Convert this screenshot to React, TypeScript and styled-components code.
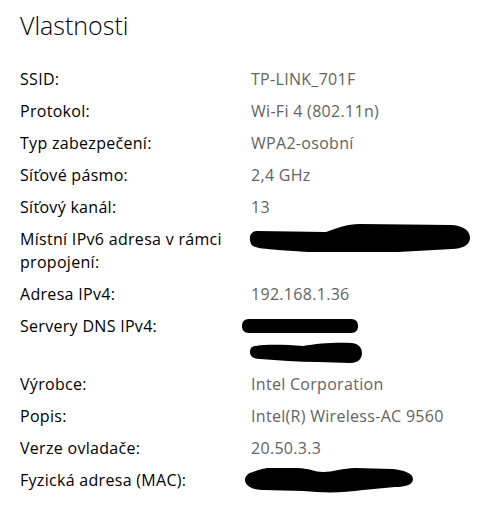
import { Fragment } from 'react';
import styled, { createGlobalStyle } from 'styled-components';

const GlobalStyle = createGlobalStyle`
    html, body {
        margin: 0;
        padding: 0;
        background: #ffffff;
    }
    body {
        font-family: "Open Sans", "Noto Sans", sans-serif;
        color: #000000;
    }
`;

const Page = styled.div`
    width: 490px;
    height: 511px;
    padding: 0 20px;
    box-sizing: border-box;
    overflow: hidden;
`;

const Title = styled.h1`
    margin: 0;
    padding-top: 9px;
    font-size: 25px;
    font-weight: 300;
    line-height: 32px;
`;

const PropGrid = styled.div`
    margin-top: 27px;
    display: grid;
    grid-template-columns: 221px 1fr;
    column-gap: 10px;
    row-gap: 9px;
    font-size: 16px;
    letter-spacing: 0.3px;
    line-height: 23px;
`;

const Label = styled.div`
    color: #000000;
`;

const Value = styled.div`
    color: #636363;
`;

// one line of the value column, the marker scribble hangs over it
const Slot = styled.div`
    height: 23px;
`;

const Scribble = styled.svg<{ $shift: number; $left: number }>`
    display: block;
    margin-top: ${(p) => p.$shift}px;
    margin-left: ${(p) => p.$left}px;
`;

type Blob = { w: number; h: number; shift: number; left: number; d: string };

const ipv6Blob: Blob = {
    w: 224,
    h: 32,
    shift: -5,
    left: -3,
    d: 'M10 8 L78 9 C90 5 98 1 112 1 L204 2 C216 3 222 8 222 15 C222 22 214 26 204 26 L150 29 L60 29 L30 27 C18 26 8 25 5 23 C1 20 1 12 4 10 C6 8 8 8 10 8 Z',
};

const dnsBlobs: Blob[] = [
    {
        w: 120,
        h: 18,
        shift: 2,
        left: -11,
        d: 'M9 2 L111 2 C116 2 118 5 118 9 C118 13 116 16 111 16 L9 16 C4 16 2 13 2 9 C2 5 4 2 9 2 Z',
    },
    {
        w: 116,
        h: 24,
        shift: 1,
        left: -3,
        d: 'M8 5 C20 3 40 4 55 5 C70 2 90 1 104 2 C111 3 114 7 114 12 C114 18 110 22 102 22 L70 21 C50 21 30 19 12 18 C5 18 2 15 2 11 C2 7 4 5 8 5 Z',
    },
];

const macBlob: Blob = {
    w: 172,
    h: 30,
    shift: -3,
    left: -8,
    d: 'M10 6 C15 4 18 3 24 2 L55 2 C65 2 72 6 80 6 C90 6 100 2 112 2 L150 3 C160 4 170 7 170 13 C170 19 162 21 152 21 L120 24 C100 27 80 27 60 25 L20 24 C10 24 2 20 2 14 C2 10 5 7 10 6 Z',
};

type Row = { label: string; value?: string; blobs?: Blob[] };

const rows: Row[] = [
    { label: 'SSID:', value: 'TP-LINK_701F' },
    { label: 'Protokol:', value: 'Wi-Fi 4 (802.11n)' },
    { label: 'Typ zabezpečení:', value: 'WPA2-osobní' },
    { label: 'Síťové pásmo:', value: '2,4 GHz' },
    { label: 'Síťový kanál:', value: '13' },
    { label: 'Místní IPv6 adresa v rámci propojení:', blobs: [ipv6Blob] },
    { label: 'Adresa IPv4:', value: '192.168.1.36' },
    { label: 'Servery DNS IPv4:', blobs: dnsBlobs },
    { label: 'Výrobce:', value: 'Intel Corporation' },
    { label: 'Popis:', value: 'Intel(R) Wireless-AC 9560' },
    { label: 'Verze ovladače:', value: '20.50.3.3' },
    { label: 'Fyzická adresa (MAC):', blobs: [macBlob] },
];

function Redaction({ blob }: { blob: Blob }) {
    return (
        <Slot>
            <Scribble
                $shift={blob.shift}
                $left={blob.left}
                width={blob.w}
                height={blob.h}
                viewBox={`0 0 ${blob.w} ${blob.h}`}
            >
                <path d={blob.d} fill="#000000" />
            </Scribble>
        </Slot>
    );
}

function App() {
    return (
        <Page>
            <GlobalStyle />
            <Title>Vlastnosti</Title>
            <PropGrid>
                {rows.map((row) => (
                    <Fragment key={row.label}>
                        <Label>{row.label}</Label>
                        <Value>
                            {row.value}
                            {row.blobs?.map((b, i) => (
                                <Redaction key={i} blob={b} />
                            ))}
                        </Value>
                    </Fragment>
                ))}
            </PropGrid>
        </Page>
    );
}

export default App;
